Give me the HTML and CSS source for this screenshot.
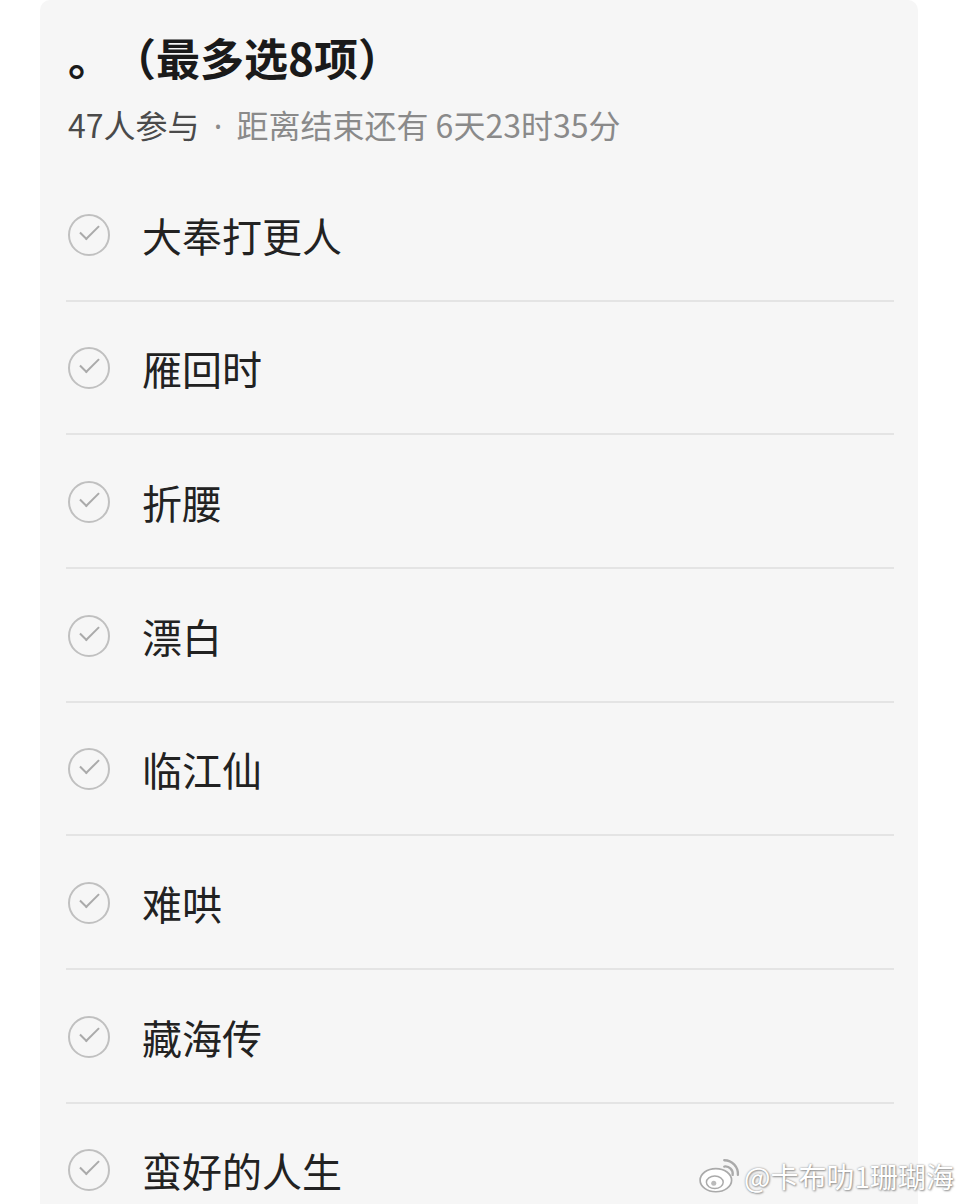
FILE: index.html
```html
<!DOCTYPE html>
<html lang="zh-CN">
<head>
  <meta charset="UTF-8">
  <title>投票</title>
  <link rel="stylesheet" href="styles.css">
</head>
<body>
  <div class="card">
    <h1 class="poll-title">。（最多选8项）</h1>
    <p class="poll-meta"><span class="count">47人参与</span> <span class="dot">·</span> 距离结束还有 6天23时35分</p>

    <ul class="options">
      <li class="option"><span class="tick"></span>大奉打更人</li>
      <li class="option"><span class="tick"></span>雁回时</li>
      <li class="option"><span class="tick"></span>折腰</li>
      <li class="option"><span class="tick"></span>漂白</li>
      <li class="option"><span class="tick"></span>临江仙</li>
      <li class="option"><span class="tick"></span>难哄</li>
      <li class="option"><span class="tick"></span>藏海传</li>
      <li class="option"><span class="tick"></span>蛮好的人生</li>
    </ul>
  </div>

  <!-- watermark -->
  <div class="watermark">
    <svg class="wb-logo" width="42" height="38" viewBox="0 0 40 36">
      <ellipse cx="17" cy="22" rx="15" ry="11" fill="#fff" stroke="#aaa" stroke-width="1.6"/>
      <ellipse cx="16" cy="24" rx="8" ry="6" fill="#fff" stroke="#aaa" stroke-width="1.4"/>
      <circle cx="15" cy="25" r="2.4" fill="#bbb"/>
      <path d="M25 9 a7 7 0 0 1 8 8" fill="none" stroke="#aaa" stroke-width="2.2" stroke-linecap="round"/>
      <path d="M25 3 a13 13 0 0 1 13 14" fill="none" stroke="#aaa" stroke-width="2.2" stroke-linecap="round"/>
    </svg>
    <span>@卡布叻1珊瑚海</span>
  </div>
</body>
</html>
```

FILE: styles.css
```css
html, body {
  margin: 0;
  padding: 0;
  height: 1204px;
  overflow: hidden;
  background: #fff;
  font-family: "Noto Sans CJK SC", "Noto Sans", sans-serif;
}

.card {
  margin-left: 40px;
  width: 878px;
  height: 1204px;
  box-sizing: border-box;
  padding: 32px 24px 0 26px;
  background: #f6f6f6;
  border-radius: 10px 10px 0 0;
}

.poll-title {
  margin: 0 0 0 2px;
  font-size: 44px;
  line-height: 50px;
  font-weight: 700;
  color: #1a1a1a;
  text-spacing-trim: space-all;
}

.poll-meta {
  margin: 22px 0 0 2px;
  font-size: 32px;
  line-height: 40px;
  color: #8a8a8a;
}

.count {
  color: #4a4a4a;
}

.dot {
  font-family: "Noto Sans", sans-serif;
  margin: 0 7px;
}

.options {
  list-style: none;
  margin: 22px 0 0;
  padding: 0;
}

.option {
  height: 133.67px;
  box-sizing: border-box;
  padding-top: 2px;
  display: flex;
  align-items: center;
  gap: 32px;
  padding-left: 2px;
  border-bottom: 2px solid #e4e4e4;
  font-size: 40px;
  color: #222;
}

.tick {
  position: relative;
  flex: none;
  width: 38px;
  height: 38px;
  border: 2.5px solid #c0c0c0;
  border-radius: 50%;
}

.tick::after {
  content: "";
  position: absolute;
  left: 10px;
  top: 9px;
  width: 17px;
  height: 8px;
  border-left: 2.5px solid #aaa;
  border-bottom: 2.5px solid #aaa;
  transform: rotate(-45deg);
}

.watermark {
  position: absolute;
  right: 6px;
  bottom: 8px;
  display: flex;
  align-items: center;
  gap: 4px;
  font-size: 28px;
  color: #fff;
  text-shadow: 0 0 2px #888, 1px 1px 2px #999;
}
```
